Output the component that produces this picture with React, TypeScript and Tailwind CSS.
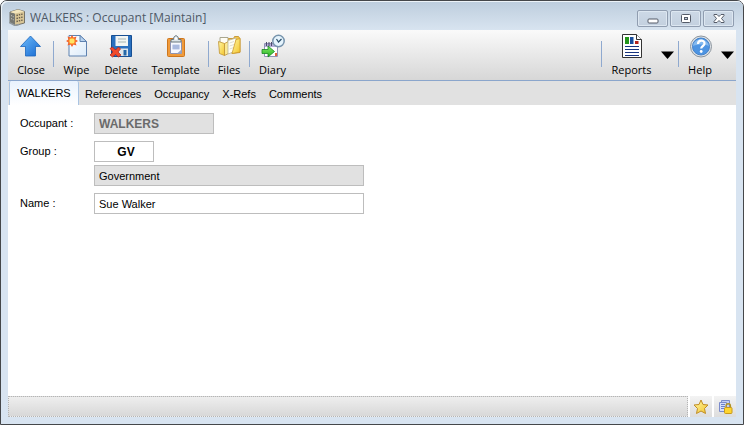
import { useState, type ReactNode } from 'react'

const tabs = ['References', 'Occupancy', 'X-Refs', 'Comments']

type ToolButtonProps = {
  label: string
  width: string
  children: ReactNode
}

function ToolButton({ label, width, children }: ToolButtonProps) {
  return (
    <button
      type="button"
      className={`flex shrink-0 flex-col items-center gap-1 whitespace-nowrap text-[11px] leading-4 text-black ${width}`}
    >
      <svg viewBox="0 0 24 24" className="size-6" aria-hidden="true">
        {children}
      </svg>
      {label}
    </button>
  )
}

function Separator() {
  return <div className="mt-[7px] h-[26px] w-px shrink-0 bg-[#8fa9cf]" />
}

function MenuArrow({ label }: { label: string }) {
  return (
    <button type="button" aria-label={label} className="mt-[13px] h-4 w-[13px] shrink-0">
      <svg viewBox="0 0 13 16" className="h-4 w-[13px]">
        <path d="M0 4.500h13L6.500 12z" fill="#000" />
      </svg>
    </button>
  )
}

function WindowButton({ label, children }: { label: string; children: ReactNode }) {
  return (
    <button
      type="button"
      aria-label={label}
      className="flex h-[17px] w-[31px] items-center justify-center rounded-[2px] border border-[#909db0] bg-linear-to-b from-[#cdd9e6] to-[#c3d0df] shadow-[inset_0_0_0_1px_#dde7f1]"
    >
      <svg viewBox="0 0 14 13" className="h-[13px] w-[14px]">
        {children}
      </svg>
    </button>
  )
}

function Gradients() {
  return (
    <svg className="absolute size-0" aria-hidden="true">
      <defs>
        <linearGradient id="blue" x1="0" y1="0" x2="1" y2="1">
          <stop offset="0" stopColor="#6fbdfc" />
          <stop offset="1" stopColor="#1668d0" />
        </linearGradient>
        <linearGradient id="paper" x1="0" y1="0" x2="1" y2="1">
          <stop offset="0" stopColor="#ffffff" />
          <stop offset="1" stopColor="#dcebfa" />
        </linearGradient>
        <linearGradient id="gold" x1="0" y1="0" x2="1" y2="1">
          <stop offset="0" stopColor="#fff7a8" />
          <stop offset="1" stopColor="#f3c52b" />
        </linearGradient>
        <linearGradient id="green" x1="0" y1="0" x2="0" y2="1">
          <stop offset="0" stopColor="#86ee6a" />
          <stop offset="1" stopColor="#25b021" />
        </linearGradient>
      </defs>
    </svg>
  )
}

function BuildingIcon() {
  return (
    <svg viewBox="0 0 17 17" className="size-[17px]" aria-hidden="true">
      <path d="M1 3 9 .500 15.500 2.500V14L6 16.500 1 13.500z" fill="#d8c596" stroke="#5e5a51" strokeWidth=".8" />
      <path d="M1 3 6 4.500V16.500L1 13.500z" fill="#777872" />
      <path d="m1 3 8-2.500 6.500 2L6 4.500z" fill="#f4e6bd" />
      <path d="M7.500 6.500 14 5M7.500 9.500 14 8M7.500 12.500 14 11" stroke="#5f5647" strokeWidth="1.300" strokeDasharray="1.400 1" />
      <path d="M2 6.500 5 8M2 9.500 5 11" stroke="#d0d0c9" strokeDasharray="1 1" />
      <path d="m0 13.500 6 3 4-1" fill="none" stroke="#939a9e" strokeWidth="1.500" />
    </svg>
  )
}

function Field({ id, label, children }: { id: string; label: string; children: ReactNode }) {
  return (
    <div className="flex items-start">
      <label htmlFor={id} className="w-[74px] shrink-0 leading-[21px]">
        {label}
      </label>
      {children}
    </div>
  )
}

export default function App() {
  const [group, setGroup] = useState('GV')
  const [name, setName] = useState('Sue Walker')

  return (
    <div className="flex min-h-screen flex-col rounded-t-[7px] border border-[#45474a] bg-[#d8e4f1] px-[7px] pb-[7px] font-['Liberation_Sans',Arial,sans-serif] text-[11px] text-black">
      <Gradients />

      <header className="-mx-[7px] flex h-[29px] shrink-0 items-start justify-between rounded-t-[6px] bg-linear-to-b from-[#bdcddd] to-[#d8e4f0] pr-[9px] pl-2 shadow-[inset_1px_1px_0_#edf3f8]">
        <div className="flex items-center gap-1 pt-2">
          <BuildingIcon />
          <h1 className="font-['Open_Sans','Noto_Sans',sans-serif] text-[12px] leading-4 whitespace-nowrap text-[#4d5866]">
            WALKERS : Occupant [Maintain]
          </h1>
        </div>
        <div className="flex gap-0.5 pt-[9px]">
          <WindowButton label="Minimize">
            <rect x="2" y="7" width="10" height="4" rx="1" fill="#fff" stroke="#545b68" />
          </WindowButton>
          <WindowButton label="Restore">
            <rect x="2.500" y="2.500" width="9" height="8" rx="1" fill="#fff" stroke="#545b68" />
            <rect x="5.500" y="5.500" width="3" height="2" fill="#c3cfdc" stroke="#545b68" />
          </WindowButton>
          <WindowButton label="Close window">
            <path
              d="M2 2.500h3l2 2 2-2h3v1L9.500 6.500l2.500 3v1H9l-2-2-2 2H2v-1l2.500-3L2 3.500z"
              fill="#fff"
              stroke="#545b68"
            />
          </WindowButton>
        </div>
      </header>

      <nav
        aria-label="Toolbar"
        className="flex h-[51px] shrink-0 items-start justify-between border-b border-[#8ba6cc] bg-linear-to-b from-[#fafafa] to-[#d7d7d7] pt-1 pr-0.5 pl-[5px] font-['Open_Sans','Noto_Sans',sans-serif]"
      >
        <div className="flex gap-1">
          <ToolButton label="Close" width="w-[36px]">
            <path d="M11.500 2 1.500 12.500H6.500V22h10v-9.500h5z" fill="url(#blue)" stroke="#1c66bd" strokeWidth=".8" />
          </ToolButton>
          <Separator />
          <ToolButton label="Wipe" width="w-[37px]">
            <path d="M4 1.500h11l6.500 6V22H4z" fill="url(#paper)" stroke="#5f82b0" />
            <path d="M15 1.500v6h6.500z" fill="#b8d3ef" stroke="#5f82b0" />
            <path
              d="m7 1 1.500 2.500 3-1-1 3 2.500 1.500-2.500 1.500 1 3-3-1L7 13l-1.500-2.500-3 1 1-3L1 7l2.500-1.500-1-3 3 1z"
              fill="#f4602a"
            />
            <circle cx="7" cy="7" r="3" fill="#ffe566" stroke="#ff9a2c" />
          </ToolButton>
          <ToolButton label="Delete" width="w-[44px]">
            <path d="M2.500 1.500h20v21h-18l-2-2z" fill="#2a70bf" stroke="#174f93" />
            <path d="M6.500 2h12.500v10H6.500z" fill="#f2f5f4" />
            <path d="M9 5h8M9 8h8" stroke="#a7b5b2" />
            <path d="M8 14.500h11V22H8z" fill="#dfe5ea" />
            <path d="M14.500 16h3v5.500h-3z" fill="#2568a9" />
            <path
              d="m1 14.500 2.500-1.500 3 3 3-3 2 2-2.500 3 3 3-2.500 2-3-2.500L3.500 23 1 21l3-3z"
              fill="#f14a2c"
              stroke="#a82119"
              strokeWidth=".7"
            />
          </ToolButton>
          <ToolButton label="Template" width="w-[57px]">
            <rect x="3.500" y="4.500" width="17" height="18" rx="1" fill="#f09a3a" stroke="#cd761d" />
            <path d="M6.500 7.500h11v12h-11z" fill="#f7f9ff" stroke="#8f93b0" />
            <path d="M8.500 10.500h7v5h-7z" fill="#b9c6e6" />
            <path d="M8.500 12h7M8.500 14h7" stroke="#8fa3d1" strokeWidth=".7" />
            <path d="m13 19.500 4.500-4v4z" fill="#9ca7c5" />
            <path d="M7 8V5.500h2.500C9.500.500 14.500.500 14.500 5.500H17V8z" fill="#dce4e8" stroke="#69767d" />
            <circle cx="12" cy="4.500" r="1.200" fill="#fff" />
          </ToolButton>
          <Separator />
          <ToolButton label="Files" width="w-8">
            <path d="M3 3.500h8v13H3z" fill="#fffdf4" stroke="#a9a68f" />
            <path d="m1.500 7.500 6 2v12l-5-2z" fill="url(#gold)" stroke="#c09332" strokeWidth=".8" />
            <path d="m7.500 9.500 4-2v12l-4 2z" fill="#fbe892" stroke="#c09332" strokeWidth=".8" />
            <path d="M11.500 4.500h5l1-2h4l1.500 2v14l-8 1z" fill="#f4c74b" stroke="#bd8a25" strokeWidth=".8" />
            <path d="M11 6.500 19 4v13l-8 3z" fill="#fffef4" stroke="#b6b49c" strokeWidth=".8" />
            <path d="M12.500 9 17 7.500M12.500 12l4.500-1.500M12.500 15l4.500-1.500" stroke="#d4d4cb" strokeWidth=".8" />
            <path d="m15 19.500 4-14 4-1V18z" fill="url(#gold)" stroke="#cf9c2b" strokeWidth=".8" />
          </ToolButton>
          <Separator />
          <ToolButton label="Diary" width="w-[37px]">
            <path d="M3.500 9.500h13v13h-13z" fill="#fff" stroke="#9192b6" />
            <path d="M4 10h12v3H4z" fill="#b4aed8" />
            <path d="M5.500 8v4m2.500-4v4m2.500-4v4" stroke="#4c496c" />
            <path d="M14 19h2v3h-2z" fill="#e0643a" />
            <circle cx="17.500" cy="7" r="5.700" fill="#e5f4fd" stroke="#7794ad" strokeWidth="1.500" />
            <path d="m15.500 5 2 3 3-3" fill="none" stroke="#294c68" strokeWidth="1.200" />
            <path d="M1 15.500h6V12l6.500 5.500L7 23v-3.500H1z" fill="url(#green)" stroke="#178820" strokeWidth=".8" />
          </ToolButton>
        </div>

        <div className="flex gap-1">
          <Separator />
          <ToolButton label="Reports" width="w-[51px]">
            <path d="M2.500.500h14l5 5v18h-19z" fill="#fff" stroke="#333" />
            <path d="M16.500.500v5h5" fill="#fff" stroke="#333" />
            <path d="M5 3h4v7H5z" fill="#25961c" />
            <path d="M10 3h3.500v7H10z" fill="#194f9e" />
            <path d="M15 7h3.500v3H15z" fill="#b5231b" />
            <path d="M5 12.500h14M5 15.500h14M5 18.500h14M5 21.500h14" stroke="#17347f" />
          </ToolButton>
          <MenuArrow label="Reports menu" />
          <Separator />
          <ToolButton label="Help" width="w-[34px]">
            <circle cx="13" cy="12.500" r="10.500" fill="#dde2e7" stroke="#8b949d" />
            <circle cx="13" cy="12.500" r="8.500" fill="#4d94e2" stroke="#4482ca" />
            <path d="M5 12c1-9 14-9 16 0-5-2-11-2-16 0z" fill="#83b9ef" />
            <path
              d="M10 10c0-4.500 6.500-4.500 6.500-.5 0 2.500-3.300 2.500-3.300 5"
              fill="none"
              stroke="#fff"
              strokeWidth="2.200"
            />
            <circle cx="13.200" cy="17.500" r="1.400" fill="#fff" />
          </ToolButton>
          <MenuArrow label="Help menu" />
        </div>
      </nav>

      <div role="tablist" className="flex h-6 shrink-0 bg-[#e1e1e1] pl-px leading-[26px]">
        <button
          type="button"
          role="tab"
          aria-selected="true"
          className="w-[70px] rounded-t-[2px] border-x border-[#a9c4e3] bg-linear-to-b from-[#e9f2fd] to-white leading-[22px]"
        >
          WALKERS
        </button>
        <div className="flex gap-[13px] pl-1.5">
          {tabs.map((tab) => (
            <button key={tab} type="button" role="tab" aria-selected="false">
              {tab}
            </button>
          ))}
        </div>
      </div>

      <main className="flex flex-1 flex-col gap-[7px] bg-white px-3 pt-2">
        <Field id="occupant" label="Occupant :">
          <input
            id="occupant"
            readOnly
            value="WALKERS"
            className="h-[21px] w-[120px] border border-[#bdbdbd] bg-[#e1e1e1] px-1 text-[12px] font-bold text-[#6b6b6b]"
          />
        </Field>
        <Field id="group" label="Group :">
          <div className="flex flex-1 flex-col gap-[3px]">
            <input
              id="group"
              value={group}
              onChange={(e) => setGroup(e.target.value)}
              className="h-[21px] w-[60px] border border-[#bdbdbd] bg-white pl-1 text-center text-[12px] font-bold"
            />
            <input
              aria-label="Group name"
              readOnly
              value="Government"
              className="h-[21px] w-full max-w-[270px] border border-[#bdbdbd] bg-[#e1e1e1] px-1"
            />
          </div>
        </Field>
        <Field id="name" label="Name :">
          <input
            id="name"
            value={name}
            onChange={(e) => setName(e.target.value)}
            className="h-[21px] w-full max-w-[270px] border border-[#bdbdbd] bg-white px-1"
          />
        </Field>
      </main>

      <footer className="flex h-[21px] shrink-0 gap-0.5 bg-white">
        <div className="flex-1 border border-dotted border-[#b5b5b5] bg-linear-to-b from-[#eeeeee] to-[#d8d8d8]" />
        <button
          type="button"
          aria-label="Favourite"
          className="flex w-[22px] items-center justify-center bg-linear-to-b from-[#f3f3f3] to-[#dddddd]"
        >
          <svg viewBox="0 0 16 16" className="size-4">
            <path
              d="m8 1 2 4.500 5 .5-3.500 3.500 1 5L8 12l-4.500 2.500 1-5L1 6l5-.5z"
              fill="url(#gold)"
              stroke="#c08d25"
            />
          </svg>
        </button>
        <button
          type="button"
          aria-label="Record lock"
          className="flex w-[22px] items-center justify-center bg-linear-to-b from-[#f3f3f3] to-[#dddddd]"
        >
          <svg viewBox="0 0 16 16" className="size-4">
            <path d="M4.500 1.500h8v10h-8z" fill="#c3cdf2" stroke="#7b8bcb" />
            <path d="M2.500 3.500h7v9h-7z" fill="#d5ddfa" stroke="#7b8bcb" />
            <path d="M4 5.500h4M4 7.500h4M4 9.500h4" stroke="#6b80cb" />
            <path d="M9 9V7c0-3 4.500-3 4.500 0v2" fill="none" stroke="#b09326" strokeWidth="1.300" />
            <rect x="7.500" y="8.500" width="7.500" height="6" rx="1" fill="#ffd52f" stroke="#c89a1c" />
          </svg>
        </button>
      </footer>
    </div>
  )
}
